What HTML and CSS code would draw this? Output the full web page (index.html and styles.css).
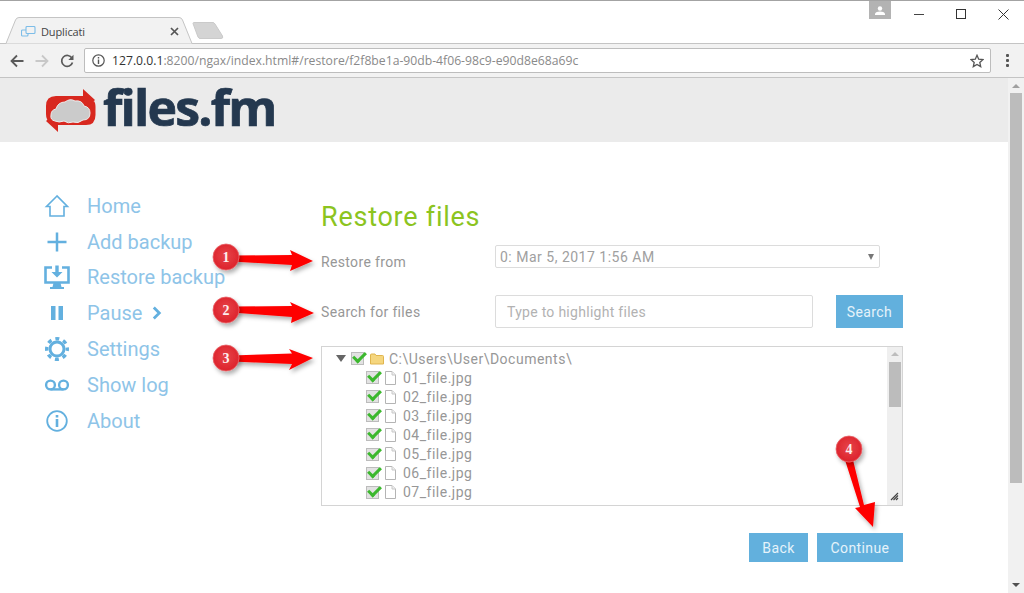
FILE: index.html
```html
<!DOCTYPE html>
<html lang="en">
<head>
<meta charset="utf-8">
<title>Duplicati</title>
<link rel="stylesheet" href="styles.css">
</head>
<body>
<svg class="defs" width="0" height="0"><defs><symbol id="doc" viewBox="0 0 11 14"><path d="M.5 .5H7L10.500 4V13.500H.5Z" fill="#fff" stroke="#b4b4b4"/><path d="M7 .5V4H10.500" fill="#eee" stroke="#c8c8c8"/></symbol></defs></svg>
<div class="tabstrip">
  <div class="tab">
    <svg class="tab-shape" width="192" height="27" viewBox="0 0 192 27"><path d="M0 26.500H4L13.500 3Q14.500 .5 17 .5H177Q179.500 .5 180.500 3L190 26.500" fill="#f2f2f2" stroke="#c4c4c4"/></svg>
    <svg class="favicon" width="15" height="11" viewBox="0 0 15 11"><g fill="none" stroke="#7dbde8" stroke-width="1.100"><rect x="5" y=".5" width="9" height="7" rx="1"/><path d="M5 4H1.500Q.5 4 .5 5V9Q.5 10 1.500 10H6Q7 10 7 9V7.500"/></g></svg>
    <span class="tab-title">Duplicati</span>
    <svg class="tab-close" width="9" height="9" viewBox="0 0 9 9"><path d="M1 1L8 8M8 1L1 8" stroke="#555" stroke-width="1.700"/></svg>
  </div>
  <svg class="newtab" width="32" height="18" viewBox="0 0 32 18"><path d="M1 1.500Q1 .5 2 .5H21Q22 .5 23 2L30.500 14Q31.500 16.500 29 16.500H8Q7 16.500 6 15Z" fill="#d4d4d4" stroke="#cacaca"/></svg>
  <div class="winctl">
    <div class="avatar"><svg width="10" height="9" viewBox="0 0 10 9"><circle cx="5" cy="2.500" r="2.200" fill="#fff"/><path d="M0 9V7.500Q1 5.500 5 5.500T10 7.500V9Z" fill="#fff"/></svg></div>
    <svg class="wc wc-min" width="10" height="10" viewBox="0 0 10 10"><path d="M0 5.500H10" stroke="#444"/></svg>
    <svg class="wc wc-max" width="10" height="10" viewBox="0 0 10 10"><rect x=".5" y=".5" width="9" height="9" fill="none" stroke="#333"/></svg>
    <svg class="wc wc-close" width="11" height="11" viewBox="0 0 11 11"><path d="M.5 .5L10.500 10.500M10.500 .5L.5 10.500" stroke="#333"/></svg>
  </div>
</div>
<div class="toolbar">
  <svg class="nav" width="14" height="14" viewBox="0 0 14 14"><path d="M13.500 7H2M7 1.500L1.500 7L7 12.500" fill="none" stroke="#5a5a5a" stroke-width="1.800"/></svg>
  <svg class="nav" width="14" height="14" viewBox="0 0 14 14"><path d="M.5 7H12M7 1.500L12.500 7L7 12.500" fill="none" stroke="#c8c8c8" stroke-width="1.800"/></svg>
  <svg class="nav" width="14" height="14" viewBox="0 0 14 14"><path d="M12 4.200A5.500 5.500 0 1 0 12.500 8.500" fill="none" stroke="#5a5a5a" stroke-width="1.700"/><path d="M13.500 .8V6H8.300Z" fill="#5a5a5a"/></svg>
  <div class="omnibox">
    <svg width="13" height="13" viewBox="0 0 13 13"><circle cx="6.500" cy="6.500" r="5.700" fill="none" stroke="#555" stroke-width="1.200"/><path d="M6.500 5.500V10M6.500 3V4.400" stroke="#555" stroke-width="1.400"/></svg>
    <span class="url"><span class="url-host">127.0.0.1</span>:8200/ngax/index.html#/restore/f2f8be1a-90db-4f06-98c9-e90d8e68a69c</span>
    <svg class="star" width="14" height="14" viewBox="0 0 14 14"><path d="M7 1.300L8.700 5.200L13 5.600L9.800 8.400L10.700 12.600L7 10.400L3.300 12.600L4.200 8.400L1 5.600L5.300 5.200Z" fill="none" stroke="#555" stroke-width="1.300"/></svg>
  </div>
  <div class="menu-dots"><i></i><i></i><i></i></div>
</div>
<div class="viewport">
  <div class="page">
    <header class="brand">
      <svg class="brand-icon" width="52" height="44" viewBox="0 0 52 44">
        <path d="M2 30Q1 28 1 25V17Q1 7 11 7H38V0L50 11L38 22V17L3 32Z" fill="#d8281f"/>
        <path d="M50 14Q50.500 16 50.500 18V26Q50.500 36 41 36H13V43L1 32L13 21V26L49 12Z" fill="#d8281f"/>
        <path d="M10 32Q5 31 6 26Q6 21 11 20Q13 13 20 13Q25 9 30 12Q37 11 39 17Q45 18 45 24Q45 31 38 31Q33 35 28 33Q23 35 19 32Q14 34 10 32Z" fill="#cbcbcb" stroke="#ececec" stroke-width="1"/>
      </svg>
      <span class="brand-name">files.fm</span>
    </header>
    <div class="content">
      <nav class="sidebar">
        <a class="nav-item"><svg width="26" height="26" viewBox="0 0 26 26"><path d="M13 3L2.500 13.500H6V23H20V13.500H23.500Z" fill="none" stroke="#63b0df" stroke-width="1.600"/></svg><span>Home</span></a>
        <a class="nav-item"><svg width="26" height="26" viewBox="0 0 26 26"><path d="M13 3.500V22.500M3.500 13H22.500" stroke="#63b0df" stroke-width="2.500"/></svg><span>Add backup</span></a>
        <a class="nav-item"><svg width="26" height="26" viewBox="0 0 26 26"><path d="M8 3.500H1.500V18.500H24.500V3.500H18" fill="none" stroke="#63b0df" stroke-width="2.600"/><path d="M11.300 1.500H14.700V8H18.500L13 13.500L7.500 8H11.300Z" fill="#63b0df"/><path d="M9.500 19H16.500L17.500 23H20V25H6V23H8.500Z" fill="#63b0df"/></svg><span>Restore backup</span></a>
        <a class="nav-item"><svg width="26" height="26" viewBox="0 0 26 26"><path d="M7 6H11.500V20H7ZM14.500 6H19V20H14.500Z" fill="#63b0df"/></svg><span>Pause</span><svg class="chev" width="10" height="14" viewBox="0 0 10 14"><path d="M1.800 1.500L7.300 7L1.800 12.500" fill="none" stroke="#63b0df" stroke-width="2.800"/></svg></a>
        <a class="nav-item"><svg width="26" height="26" viewBox="0 0 26 26"><circle cx="13" cy="13" r="7" fill="none" stroke="#63b0df" stroke-width="3"/><circle cx="13" cy="13" r="10.300" fill="none" stroke="#63b0df" stroke-width="3.400" stroke-dasharray="4 4.090" stroke-dashoffset="2"/></svg><span>Settings</span></a>
        <a class="nav-item"><svg width="26" height="26" viewBox="0 0 26 26"><circle cx="6.500" cy="13" r="4.400" fill="none" stroke="#63b0df" stroke-width="2.400"/><circle cx="19.500" cy="13" r="4.400" fill="none" stroke="#63b0df" stroke-width="2.400"/><path d="M6.500 17.400H19.500" stroke="#63b0df" stroke-width="2.400"/></svg><span>Show log</span></a>
        <a class="nav-item"><svg width="26" height="26" viewBox="0 0 26 26"><circle cx="13" cy="13" r="9.800" fill="none" stroke="#63b0df" stroke-width="1.800"/><path d="M13 11V19M13 7V9.500" stroke="#63b0df" stroke-width="2.600"/></svg><span>About</span></a>
      </nav>
      <main class="main">
        <h1 class="title">Restore files</h1>
        <div class="row row-from">
          <label class="lbl">Restore from</label>
          <div class="select"><span>0: Mar 5, 2017 1:56 AM</span><i class="caret"></i></div>
        </div>
        <div class="row row-search">
          <label class="lbl">Search for files</label>
          <div class="input">Type to highlight files</div>
          <button class="btn btn-search">Search</button>
        </div>
        <div class="tree">
          <div class="tree-list">
            <div class="tree-row root"><i class="twist"></i><i class="cb"></i>
              <svg class="folder" width="14" height="12" viewBox="0 0 14 12"><path d="M.5 2Q.5 1 1.500 1H5L6 2.500H12.500Q13.500 2.500 13.500 3.500V11H.5Z" fill="#f5d67e" stroke="#e0b54e"/></svg>
              <span>C:\Users\User\Documents\</span></div>
            <div class="tree-row"><i class="cb"></i><svg class="file"><use href="#doc"/></svg><span>01_file.jpg</span></div>
            <div class="tree-row"><i class="cb"></i><svg class="file"><use href="#doc"/></svg><span>02_file.jpg</span></div>
            <div class="tree-row"><i class="cb"></i><svg class="file"><use href="#doc"/></svg><span>03_file.jpg</span></div>
            <div class="tree-row"><i class="cb"></i><svg class="file"><use href="#doc"/></svg><span>04_file.jpg</span></div>
            <div class="tree-row"><i class="cb"></i><svg class="file"><use href="#doc"/></svg><span>05_file.jpg</span></div>
            <div class="tree-row"><i class="cb"></i><svg class="file"><use href="#doc"/></svg><span>06_file.jpg</span></div>
            <div class="tree-row"><i class="cb"></i><svg class="file"><use href="#doc"/></svg><span>07_file.jpg</span></div>
          </div>
          <div class="tree-scroll">
            <i class="up-small"></i><div class="tree-thumb"></div>
            <svg class="grip" width="9" height="9" viewBox="0 0 9 9"><path d="M8 1L1 8M8 3.500L3.500 8M8 6L6 8" stroke="#444" stroke-width="1.200"/></svg>
          </div>
        </div>
        <div class="actions">
          <button class="btn btn-back">Back</button>
          <button class="btn btn-continue">Continue</button>
        </div>
      </main>
    </div>
  </div>
  <aside class="scrollbar">
    <i class="arrow-up"></i>
    <div class="thumb"></div>
    <i class="arrow-down"></i>
  </aside>
</div>
<svg class="annot" width="1024" height="593" viewBox="0 0 1024 593">
  <defs>
    <filter id="sh" x="-30%" y="-50%" width="160%" height="200%"><feDropShadow dx="2" dy="3" stdDeviation="2" flood-color="#000" flood-opacity=".3"/></filter>
    <radialGradient id="ball" cx=".5" cy=".45" r=".6"><stop offset="0" stop-color="#e6444a"/><stop offset="1" stop-color="#dc1f28"/></radialGradient>
  </defs>
  <g fill="#fe0000" filter="url(#sh)">
    <path d="M232 255.500L292 255L290 250L313 261L290 271L292 265L232 261.500Z"/>
    <path d="M232 306.500L292 306L290 302L314 313L291 323L292 317L232 312.500Z"/>
    <path d="M232 355.500L292 353.500L289 349L313 358L289 370L292 364L232 361.500Z"/>
    <path d="M845 460L853 460L864 505L875 502L873 527L855 508L860 507Z"/>
  </g>
  <g stroke="#e8656a" stroke-width=".8" fill="url(#ball)" filter="url(#sh)">
    <circle cx="226" cy="257" r="13"/>
    <circle cx="226" cy="310" r="13"/>
    <circle cx="226" cy="358" r="13"/>
    <circle cx="849" cy="449" r="13"/>
  </g>
  <g class="annot-num" text-anchor="middle">
    <text x="226" y="262">1</text>
    <text x="226" y="315">2</text>
    <text x="226" y="363">3</text>
    <text x="849" y="454">4</text>
  </g>
</svg>
</body>
</html>
```

FILE: styles.css
```css
* { box-sizing: border-box; }
html, body { margin: 0; height: 593px; overflow: hidden; background: #fff; }
body { display: flex; flex-direction: column; position: relative; font-family: "Noto Sans", sans-serif; }
i { display: block; }
.defs { position: absolute; }

.tabstrip { height: 44px; flex: none; display: flex; align-items: flex-end; padding-left: 2px; border-top: 1px solid #a3a3a3; border-bottom: 1px solid #c4c4c4; }
.tab { position: relative; width: 184px; height: 26px; margin-bottom: -1px; padding: 0 0 0 19px; display: flex; align-items: center; }
.tab-shape { position: absolute; left: 0; bottom: 0; }
.favicon, .tab-title, .tab-close { position: relative; }
.tab-title { margin-left: 5px; font: 11px "Open Sans", sans-serif; letter-spacing: -.12px; color: #444; }
.tab-close { margin-left: 85px; }
.newtab { margin: 0 0 3px 6px; }
.winctl { margin-left: auto; align-self: flex-start; display: flex; }
.avatar { width: 22px; height: 18px; background: #b3b3b3; display: flex; align-items: center; justify-content: center; }
.wc { margin-top: 8px; }
.wc-min { margin-left: 23px; }
.wc-max { margin-left: 32px; }
.wc-close { margin-left: 32px; margin-right: 15px; }

.toolbar { height: 34px; flex: none; background: #f2f2f2; border-bottom: 1px solid #c4c4c4; display: flex; align-items: center; padding-left: 10px; gap: 11px; }
.nav { flex: none; }
.omnibox { margin-left: -1px; width: 907px; height: 25px; background: #fff; border: 1px solid #bdbdbd; border-radius: 2px; display: flex; align-items: center; padding: 0 6px; gap: 7px; flex: none; }
.omnibox > svg:first-child { margin-left: 1px; }
.url { font: 12.2px "Open Sans", sans-serif; color: #8a8a8a; white-space: nowrap; }
.url-host { color: #333; }
.star { margin-left: auto; }
.menu-dots { display: flex; flex-direction: column; gap: 2px; margin-left: 4px; flex: none; }
.menu-dots i { width: 3px; height: 3px; border-radius: 1px; background: #555; }

.viewport { flex: 1; min-height: 0; display: flex; }
.page { flex: 1; min-width: 0; display: flex; flex-direction: column; }
.brand { height: 64px; background: #ebebeb; display: flex; align-items: flex-start; padding: 10px 0 0 45px; gap: 6px; flex: none; }
.brand-icon { flex: none; margin-top: 1px; }
.brand-name { font: 700 50px/1 "Open Sans", sans-serif; letter-spacing: -1.8px; color: #24384f; margin-top: -6px; -webkit-text-stroke: .7px #24384f; }
.content { flex: 1; display: flex; color: #555; }
.sidebar { width: 321px; flex: none; padding: 46px 0 0 44px; display: flex; flex-direction: column; }
.nav-item { height: 35.8px; display: flex; align-items: center; font: 20px "Roboto", sans-serif; color: #8ec4e8; white-space: nowrap; }
.nav-item > svg:first-child { width: 26px; flex: none; margin-right: 17px; }
.chev { margin-left: 10px; }
.main { flex: none; width: 582px; display: flex; flex-direction: column; }
.title { margin: 58px 0 0; font: 400 27px/34px "Roboto", sans-serif; letter-spacing: .75px; color: #8cc41f; }
.row { display: flex; }
.row-from { margin-top: 11px; align-items: center; height: 23px; }
.row-search { margin-top: 27px; height: 33px; align-items: center; }
.lbl { width: 174px; flex: none; font: 14px "Roboto", sans-serif; letter-spacing: .35px; color: #979797; position: relative; }
.row-from .lbl { top: 5px; }
.select { width: 385px; height: 23px; border: 1px solid #dcdcdc; border-radius: 2px; display: flex; align-items: center; justify-content: space-between; padding: 0 5px 0 4px; font: 14px "Roboto", sans-serif; letter-spacing: .5px; color: #a0a0a0; }
.caret { width: 0; height: 0; border: 3.500px solid transparent; border-top: 6px solid #777; border-bottom: 0; }
.input { width: 318px; height: 33px; border: 1px solid #dcdcdc; border-radius: 2px; padding: 0 11px; display: flex; align-items: center; font: 14px "Roboto", sans-serif; letter-spacing: .28px; color: #b2b2b2; }
.btn { border: 0; border-radius: 0; background: #62b0dd; color: #e6f3fa; font: 14px "Roboto", sans-serif; letter-spacing: .4px; padding: 0; }
.btn-search { width: 67px; height: 33px; margin-left: 23px; }

.tree { margin-top: 18px; height: 160px; border: 1px solid #d4d4d4; display: flex; overflow: hidden; }
.tree-list { flex: 1; padding: 2px 0 0 44px; }
.tree-row { height: 19.100px; display: flex; align-items: center; font: 14px "Roboto", sans-serif; letter-spacing: .5px; color: #979797; white-space: nowrap; }
.tree-row.root { margin-left: -30px; }
.twist { width: 0; height: 0; border: 5px solid transparent; border-top: 7px solid #666; border-bottom: 0; margin-right: 5px; }
.cb { width: 13px; height: 13px; background: #e2e2e2; border: 1px solid #bcbcbc; flex: none; position: relative; margin-right: 6px; }
.cb::after { content: ""; position: absolute; left: 1px; top: -1px; width: 10px; height: 5px; border-left: 3px solid #3cb82e; border-bottom: 3px solid #3cb82e; transform: rotate(-45deg); }
.file { width: 11px; height: 14px; flex: none; margin: 0 7px 0 0; }
.folder { flex: none; margin-right: 5px; }
.tree-scroll { width: 15px; flex: none; background: #efefef; display: flex; flex-direction: column; align-items: center; padding-top: 5px; position: relative; }
.up-small { width: 0; height: 0; border: 4px solid transparent; border-bottom: 4px solid #bdbdbd; border-top: 0; }
.tree-thumb { width: 12px; height: 45px; background: #bcbcbc; margin-top: 6px; }
.grip { position: absolute; right: 3px; bottom: 4px; }
.actions { margin-top: 27px; display: flex; justify-content: flex-end; gap: 9px; }
.btn-back { width: 59px; height: 29px; }
.btn-continue { width: 86px; height: 29px; }

.scrollbar { width: 16px; flex: none; background: #f1f1f1; display: flex; flex-direction: column; align-items: center; padding: 6px 0; }
.arrow-up { width: 0; height: 0; border: 4px solid transparent; border-bottom: 4px solid #a0a0a0; border-top: 0; }
.thumb { width: 12px; height: 390px; background: #bcbcbc; margin-top: 5px; }
.arrow-down { margin-top: auto; width: 0; height: 0; border: 4px solid transparent; border-top: 4px solid #505050; border-bottom: 0; }

.annot { position: absolute; left: 0; top: 0; pointer-events: none; }
.annot-num { font: 700 14px "Liberation Serif", serif; fill: #fdeeee; }
```
